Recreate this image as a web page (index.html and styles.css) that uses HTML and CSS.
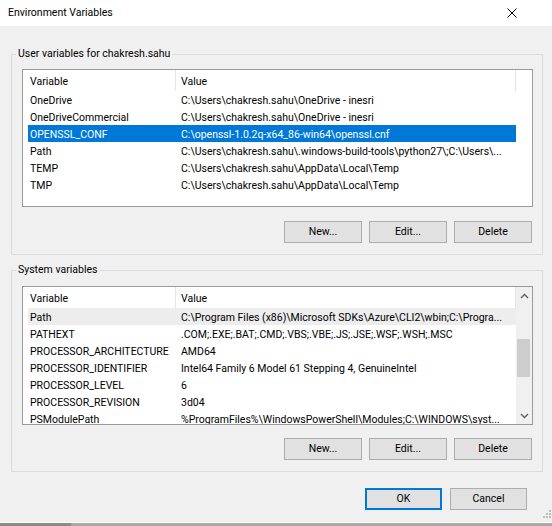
FILE: index.html
```html
<!DOCTYPE html>
<html>
<head>
<meta charset="utf-8">
<title>Environment Variables</title>
<link rel="stylesheet" href="styles.css">
</head>
<body>
<div class="window">
  <div class="titlebar">
    <span class="title">Environment Variables</span>
    <svg class="close" width="10" height="10" viewBox="0 0 10 10"><path d="M0.5 0.5L9.5 9.5M9.5 0.5L0.5 9.5" stroke="#000" stroke-width="1" fill="none"/></svg>
  </div>
  <div class="content">
    <fieldset class="group group-user">
      <legend>User variables for chakresh.sahu</legend>
      <div class="listbox list-user">
        <div class="list-inner">
          <div class="list-head"><div class="col-var">Variable</div><div class="col-val">Value</div></div>
          <div class="row"><div class="col-var">OneDrive</div><div class="col-val">C:\Users\chakresh.sahu\OneDrive - inesri</div></div>
          <div class="row"><div class="col-var">OneDriveCommercial</div><div class="col-val">C:\Users\chakresh.sahu\OneDrive - inesri</div></div>
          <div class="row selected"><div class="col-var">OPENSSL_CONF</div><div class="col-val">C:\openssl-1.0.2q-x64_86-win64\openssl.cnf</div></div>
          <div class="row"><div class="col-var">Path</div><div class="col-val">C:\Users\chakresh.sahu\.windows-build-tools\python27\;C:\Users\...</div></div>
          <div class="row"><div class="col-var">TEMP</div><div class="col-val">C:\Users\chakresh.sahu\AppData\Local\Temp</div></div>
          <div class="row"><div class="col-var">TMP</div><div class="col-val">C:\Users\chakresh.sahu\AppData\Local\Temp</div></div>
        </div>
        <div class="no-scroll"></div>
      </div>
      <div class="btnrow">
        <button class="btn">New...</button>
        <button class="btn">Edit...</button>
        <button class="btn">Delete</button>
      </div>
    </fieldset>

    <fieldset class="group group-system">
      <legend>System variables</legend>
      <div class="listbox list-system">
        <div class="list-inner">
          <div class="list-head"><div class="col-var">Variable</div><div class="col-val">Value</div></div>
          <div class="row hover"><div class="col-var">Path</div><div class="col-val">C:\Program Files (x86)\Microsoft SDKs\Azure\CLI2\wbin;C:\Progra...</div></div>
          <div class="row"><div class="col-var">PATHEXT</div><div class="col-val">.COM;.EXE;.BAT;.CMD;.VBS;.VBE;.JS;.JSE;.WSF;.WSH;.MSC</div></div>
          <div class="row"><div class="col-var">PROCESSOR_ARCHITECTURE</div><div class="col-val">AMD64</div></div>
          <div class="row"><div class="col-var">PROCESSOR_IDENTIFIER</div><div class="col-val">Intel64 Family 6 Model 61 Stepping 4, GenuineIntel</div></div>
          <div class="row"><div class="col-var">PROCESSOR_LEVEL</div><div class="col-val">6</div></div>
          <div class="row"><div class="col-var">PROCESSOR_REVISION</div><div class="col-val">3d04</div></div>
          <div class="row"><div class="col-var">PSModulePath</div><div class="col-val">%ProgramFiles%\WindowsPowerShell\Modules;C:\WINDOWS\syst...</div></div>
        </div>
        <div class="scrollbar">
          <div class="sb-arrow"><svg width="9" height="6" viewBox="0 0 9 6"><path d="M1 5L4.5 1.5L8 5" stroke="#606060" stroke-width="1.4" fill="none"/></svg></div>
          <div class="sb-track"><div class="sb-thumb"></div></div>
          <div class="sb-arrow"><svg width="9" height="6" viewBox="0 0 9 6"><path d="M1 1L4.5 4.5L8 1" stroke="#606060" stroke-width="1.4" fill="none"/></svg></div>
        </div>
      </div>
      <div class="btnrow btnrow-system">
        <button class="btn">New...</button>
        <button class="btn">Edit...</button>
        <button class="btn">Delete</button>
      </div>
    </fieldset>

    <div class="footer">
      <button class="btn btn-default">OK</button>
      <button class="btn">Cancel</button>
    </div>
  </div>
  <div class="bottom-edge"><div class="edge-dark"></div></div>
  <svg class="gripper" width="10" height="10" viewBox="0 0 10 10">
    <rect x="8" y="0" width="2" height="2" fill="#bdbdbd"/>
    <rect x="5" y="3" width="2" height="2" fill="#bdbdbd"/>
    <rect x="8" y="3" width="2" height="2" fill="#bdbdbd"/>
    <rect x="2" y="6" width="2" height="2" fill="#bdbdbd"/>
    <rect x="5" y="6" width="2" height="2" fill="#bdbdbd"/>
    <rect x="8" y="6" width="2" height="2" fill="#bdbdbd"/>
  </svg>
</div>
</body>
</html>
```

FILE: styles.css
```css
* { box-sizing: border-box; }

html, body {
  margin: 0;
  padding: 0;
}

body {
  width: 552px;
  height: 526px;
  overflow: hidden;
  background: #f0f0f0;
  font-family: Roboto, "Noto Sans", sans-serif;
  font-size: 10.5px;
  color: #000;
}

.window {
  position: relative;
  width: 552px;
  height: 526px;
  display: flex;
  flex-direction: column;
}

.titlebar {
  height: 26px;
  flex: none;
  background: #fff;
  display: flex;
  align-items: center;
  justify-content: space-between;
  padding: 0 35px 0 8px;
}

.title {
  line-height: 16px;
}

.close {
  display: block;
}

.content {
  flex: 1;
  padding: 21px 9px 0 11px;
}

.group {
  margin: 0;
  border: 1px solid #dcdcdc;
  padding: 8px 9px 11px 10px;
  min-width: 0;
}

.group legend {
  padding: 0 2px;
  margin-left: -6px;
  line-height: 14px;
}

.group-system {
  margin-top: 8px;
  padding-top: 9px;
}

.listbox {
  display: flex;
  background: #fff;
  border: 1px solid #9a9a9a;
}

.list-user { height: 138px; }
.list-system { height: 139px; }

.list-inner {
  flex: 1;
  min-width: 0;
  padding-left: 5px;
  overflow: hidden;
}

.no-scroll {
  width: 16px;
  flex: none;
}

.list-head,
.row {
  display: flex;
  white-space: nowrap;
}

.list-head {
  height: 21px;
  padding-top: 2px;
  line-height: 19px;
  border-right: 1px solid #e5e5e5;
}

.row {
  height: 17px;
  padding-top: 2px;
  line-height: 15px;
}

.col-var {
  width: 147px;
  flex: none;
  padding-left: 2px;
  overflow: hidden;
}

.col-val {
  flex: 1;
  padding-left: 5px;
  overflow: hidden;
}

.list-head .col-val {
  border-left: 1px solid #e5e5e5;
  margin-top: -2px;
  padding-top: 2px;
}

.row .col-val {
  padding-left: 6px;
}

.row.selected {
  background: #0078d7;
  color: #fff;
}

.row.hover {
  background: #ededed;
}

.scrollbar {
  width: 16px;
  flex: none;
  background: #f0f0f0;
  display: flex;
  flex-direction: column;
}

.sb-arrow {
  height: 17px;
  flex: none;
  display: flex;
  align-items: center;
  justify-content: center;
}

.sb-arrow svg { display: block; }

.sb-track {
  flex: 1;
  padding: 35px 2px 0 1px;
}

.sb-thumb {
  height: 38px;
  background: #cdcdcd;
}

.btnrow {
  display: flex;
  justify-content: flex-end;
  gap: 7px;
  margin-top: 14px;
  margin-right: 1px;
}

.btnrow-system {
  margin-top: 13px;
}

.btn {
  width: 78px;
  height: 22px;
  padding: 0;
  margin: 0;
  border: 1px solid #adadad;
  background: #e1e1e1;
  font-family: inherit;
  font-size: 10.5px;
  color: #000;
  line-height: 18px;
}

.footer {
  display: flex;
  justify-content: flex-end;
  gap: 8px;
  padding: 16px 16px 0 0;
}

.footer .btn {
  width: 77px;
}

.btn-default {
  border: 2px solid #0078d7;
}

.bottom-edge {
  height: 4px;
  flex: none;
  border-top: 1px solid #fdfdfd;
  background: #a9a9a9;
  display: flex;
}

.edge-dark {
  width: 71px;
  background: #8a8a8a;
}

.gripper {
  position: absolute;
  right: 1px;
  bottom: 6px;
}
```
